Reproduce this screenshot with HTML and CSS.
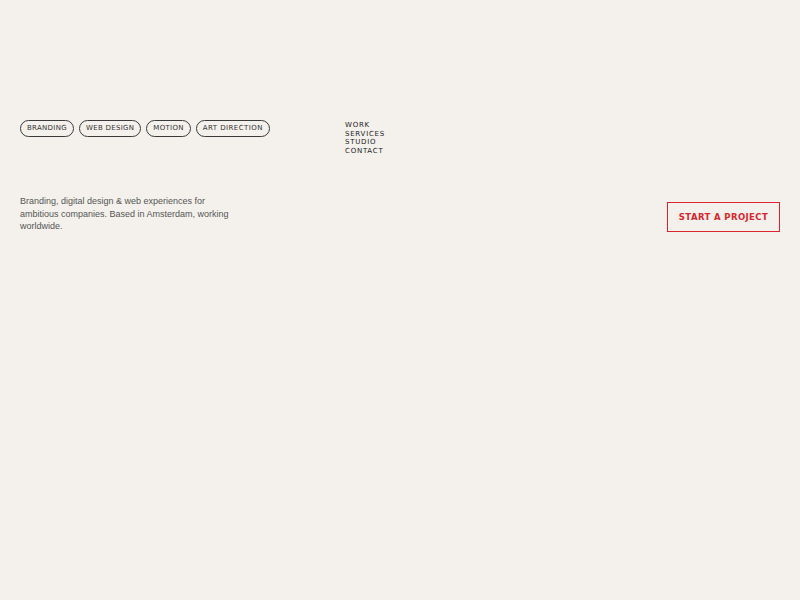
FILE: index.html
```html
<!DOCTYPE html>
<html>
<head lang="en">
    <meta charset="UTF-8">
    <title>Studio</title>
    <link rel="stylesheet" href="styles.css">
</head>
<body>
<div class="page">
    <div class="top">
        <ul class="tags">
            <li>Branding</li>
            <li>Web design</li>
            <li>Motion</li>
            <li>Art direction</li>
        </ul>
        <ul class="nav">
            <li><a href="#">Work</a></li>
            <li><a href="#">Services</a></li>
            <li><a href="#">Studio</a></li>
            <li><a href="#">Contact</a></li>
        </ul>
    </div>
    <div class="intro">
        <p>Branding, digital design &amp; web experiences for ambitious companies. Based in Amsterdam, working worldwide.</p>
        <a class="btn" href="#">Start a project</a>
    </div>
</div>
</body>
</html>
```

FILE: styles.css
```css
*{
    margin: 0;
    padding: 0;
}
li{
    list-style: none;
}
a{
    text-decoration: none;
    color: inherit;
}
html,body{
    background: #f4f1ec;
}
body{
    font-family: "DejaVu Sans", sans-serif;
    color: #2a2a2a;
}
.page{
    padding: 120px 20px 0;
}
.top{
    display: flex;
    align-items: flex-start;
}
.tags{
    display: flex;
    gap: 5px;
    width: 325px;
}
.tags li{
    height: 15px;
    line-height: 15px;
    padding: 0 6px;
    border: 1px solid #3a3a3a;
    border-radius: 9px;
    font-size: 7px;
    letter-spacing: 0.3px;
    text-transform: uppercase;
    color: #333;
}
.tags li:last-child{
    letter-spacing: 0.45px;
}
.nav{
    padding-top: 1px;
}
.nav li{
    font-size: 7px;
    line-height: 8.5px;
    letter-spacing: 0.75px;
    text-transform: uppercase;
    color: #222;
}
.intro{
    display: flex;
    justify-content: space-between;
    align-items: flex-start;
    margin-top: 40px;
}
.intro p{
    width: 212px;
    font-family: "Liberation Sans", sans-serif;
    font-size: 9px;
    line-height: 12.5px;
    color: #555;
}
.btn{
    margin-top: 7px;
    width: 111px;
    height: 28px;
    line-height: 28px;
    text-align: center;
    border: 1px solid #d9262e;
    font-size: 8.5px;
    font-weight: bold;
    letter-spacing: 0.4px;
    text-transform: uppercase;
    color: #d9262e;
}
```
